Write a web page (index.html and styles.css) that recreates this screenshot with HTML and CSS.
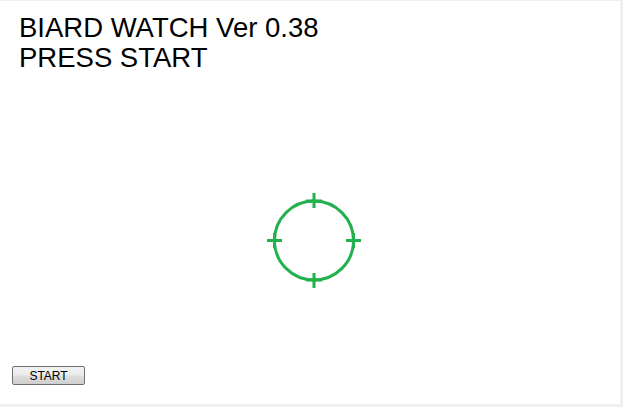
FILE: index.html
```html
<!DOCTYPE html>
<html>
<head>
<meta charset="utf-8">
<link rel="stylesheet" href="styles.css">
</head>
<body>
<div class="stage">
  <svg class="scope" width="620" height="403" viewBox="0 0 620 403">
    <g stroke="#22b14c" stroke-width="3" fill="none">
      <circle cx="314" cy="239.5" r="39.5"/>
      <line x1="314" y1="192" x2="314" y2="207"/>
      <line x1="306" y1="200" x2="322" y2="200"/>
      <line x1="314" y1="272" x2="314" y2="287"/>
      <line x1="306" y1="279" x2="322" y2="279"/>
      <line x1="267" y1="239.5" x2="282" y2="239.5"/>
      <line x1="274.5" y1="232" x2="274.5" y2="247"/>
      <line x1="346" y1="239.5" x2="361" y2="239.5"/>
      <line x1="353.5" y1="232" x2="353.5" y2="247"/>
    </g>
  </svg>
  <div class="title">
    <div>BIARD WATCH Ver 0.38</div>
    <div>PRESS START</div>
  </div>
  <div class="controls">
    <button class="btn">START</button>
  </div>
</div>
</body>
</html>
```
FILE: styles.css
```css
html, body {
  margin: 0;
  padding: 0;
  background: #f0f0f0;
}
.stage {
  position: relative;
  width: 620px;
  height: 403px;
  margin-top: 1px;
  background: #ffffff;
  display: flex;
  flex-direction: column;
  justify-content: space-between;
}
.scope {
  position: absolute;
  left: 0;
  top: 0;
}
.title {
  padding: 12px 0 0 19px;
  font-family: "Liberation Sans", Arial, sans-serif;
  font-size: 27.5px;
  line-height: 29.5px;
  color: #000;
}
.controls {
  padding: 0 0 19px 12px;
}
.btn {
  width: 73px;
  height: 19px;
  padding: 0;
  margin: 0;
  border: 1px solid #707070;
  border-radius: 2px;
  background: linear-gradient(#f2f2f2 0%, #ebebeb 45%, #dddddd 55%, #cfcfcf 100%);
  font-family: "Liberation Sans", Arial, sans-serif;
  font-size: 12px;
  color: #000;
  display: flex;
  align-items: center;
  justify-content: center;
}
```
